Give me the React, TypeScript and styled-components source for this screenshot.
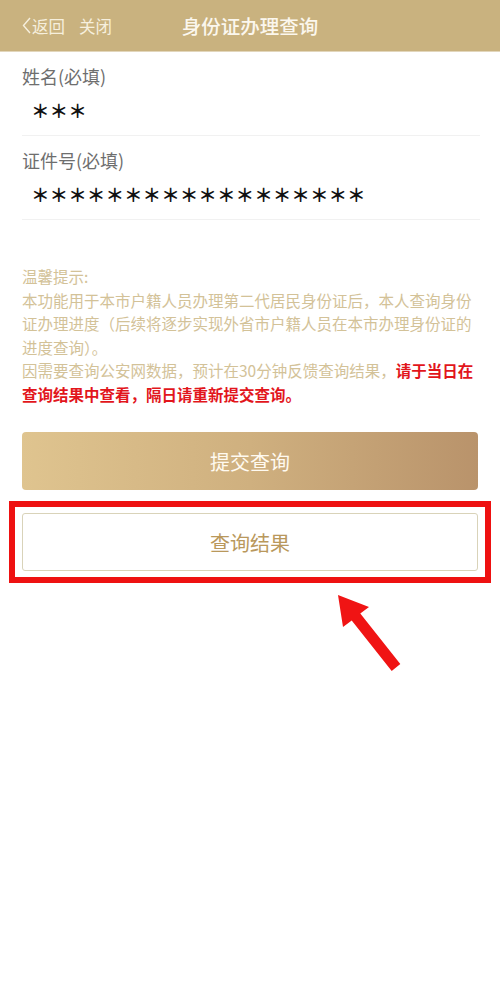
import React from "react";
import styled, { createGlobalStyle } from "styled-components";

const Global = createGlobalStyle`
  html, body { margin: 0; padding: 0; background: #fff; }
  body { font-family: "Noto Sans CJK SC", "Noto Sans", sans-serif; }
`;

const Page = styled.div`
  position: relative;
  width: 500px;
  min-height: 1001px;
  background: #fff;
`;

const Header = styled.header`
  height: 51px;
  background: #c9b27f;
  border-bottom: 1px solid #e2d6bb;
  display: flex;
  align-items: center;
  position: relative;
  color: #fbf7ee;
`;

const NavLeft = styled.div`
  display: flex;
  align-items: center;
  padding-left: 22px;
  gap: 14px;
  font-size: 16.5px;
  color: #f6efdd;
`;

const NavItem = styled.span`
  display: flex;
  align-items: center;
`;

const Title = styled.h1`
  position: absolute;
  left: 0;
  right: 0;
  top: 0;
  bottom: 0;
  margin: 0;
  display: flex;
  align-items: center;
  justify-content: center;
  font-size: 19.5px;
  font-weight: 500;
  pointer-events: none;
`;

const Form = styled.section`
  padding: 0 20px 0 22px;
`;

const Field = styled.div`
  padding: 12px 0 10px;
  border-bottom: 1px solid #f1f1f1;
`;

const Label = styled.div`
  font-size: 18px;
  line-height: 24px;
  color: #6e6e6e;
`;

const Value = styled.div`
  margin-top: 7px;
  padding-left: 9px;
  font-size: 18.6px;
  font-weight: 700;
  line-height: 30px;
  color: #111;
`;

const Notice = styled.div`
  margin: 45px 22px 0;
  font-size: 15.5px;
  line-height: 23.5px;
  color: #d3c298;
`;

const Strong = styled.span`
  color: #e2161c;
  font-weight: 700;
`;

const Actions = styled.div`
  margin-top: 26px;
  display: flex;
  flex-direction: column;
`;

const SubmitButton = styled.button`
  margin: 0 22px;
  height: 58px;
  border: none;
  border-radius: 4px;
  background: linear-gradient(90deg, #dfc48f 0%, #cfb07f 50%, #b9936b 100%);
  color: #fffaf0;
  font-family: inherit;
  font-size: 20px;
  cursor: pointer;
`;

const Highlight = styled.div`
  margin: 11px 9px 0;
  border: 6px solid #ee1111;
  padding: 6px 7px;
`;

const ResultButton = styled.button`
  width: 100%;
  height: 58px;
  border: 1px solid #d9d3b9;
  border-radius: 3px;
  background: #fff;
  color: #b9985c;
  font-family: inherit;
  font-size: 20px;
  cursor: pointer;
  display: block;
`;

const Arrow = styled.svg`
  position: absolute;
  left: 330px;
  top: 588px;
  width: 80px;
  height: 90px;
`;

const Chevron = () => (
  <svg width="9" height="17" viewBox="0 0 9 17" style={{ marginRight: 1 }}>
    <path d="M8 1 L1.5 8.5 L8 16" fill="none" stroke="#f6efdd" strokeWidth="1.4" />
  </svg>
);

export default function App() {
  const ox = 330;
  const oy = 588;
  const pts: [number, number][] = [
    [338, 595],
    [369, 607],
    [360.3, 613.6],
    [400.3, 664.1],
    [391.7, 670.9],
    [351.7, 620.4],
    [343, 627],
  ];
  const d = pts.map(([x, y]) => `${x - ox},${y - oy}`).join(" ");
  return (
    <Page>
      <Global />
      <Header>
        <NavLeft>
          <NavItem>
            <Chevron />
            返回
          </NavItem>
          <NavItem>关闭</NavItem>
        </NavLeft>
        <Title>身份证办理查询</Title>
      </Header>
      <Form>
        <Field>
          <Label>姓名(必填)</Label>
          <Value>＊＊＊</Value>
        </Field>
        <Field>
          <Label>证件号(必填)</Label>
          <Value>＊＊＊＊＊＊＊＊＊＊＊＊＊＊＊＊＊＊</Value>
        </Field>
      </Form>
      <Notice>
        温馨提示:
        <br />
        本功能用于本市户籍人员办理第二代居民身份证后，本人查询身份证办理进度（后续将逐步实现外省市户籍人员在本市办理身份证的进度查询）。
        <br />
        因需要查询公安网数据，预计在30分钟反馈查询结果，
        <Strong>请于当日在查询结果中查看，隔日请重新提交查询。</Strong>
      </Notice>
      <Actions>
        <SubmitButton>提交查询</SubmitButton>
        <Highlight>
          <ResultButton>查询结果</ResultButton>
        </Highlight>
      </Actions>
      <Arrow viewBox="0 0 80 90">
        <polygon points={d} fill="#f01414" />
      </Arrow>
    </Page>
  );
}
